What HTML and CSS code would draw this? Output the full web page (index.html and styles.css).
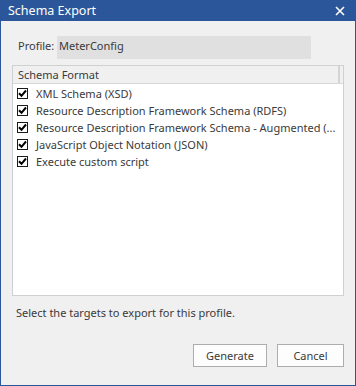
FILE: index.html
```
<!DOCTYPE html>
<html lang="en">
<head>
    <meta charset="UTF-8">
    <meta name="viewport" content="width=device-width, initial-scale=1.0">
    <title>Schema Export</title>
    <link rel="stylesheet" href="styles.css">
</head>
<body>
    <div class="window">
        <div class="titlebar">
            <span class="title">Schema Export</span>
            <svg class="close" width="10" height="10" viewBox="0 0 10 10">
                <path d="M1 1 L9 9 M9 1 L1 9" stroke="#ffffff" stroke-width="1.6"/>
            </svg>
        </div>

        <div class="content">
            <div class="profile-row">
                <span class="profile-label">Profile:</span>
                <div class="profile-value">MeterConfig</div>
            </div>

            <div class="list-box">
                <div class="list-header">
                    <span class="header-cell">Schema Format</span>
                    <span class="header-divider"></span>
                </div>
                <div class="list-body">
                    <label class="list-row"><span class="check"><svg width="9" height="9" viewBox="0 0 9 9"><path d="M1 4.2 L3.5 6.8 L8 1.5" fill="none" stroke="#000" stroke-width="2"/></svg></span>XML Schema (XSD)</label>
                    <label class="list-row"><span class="check"><svg width="9" height="9" viewBox="0 0 9 9"><path d="M1 4.2 L3.5 6.8 L8 1.5" fill="none" stroke="#000" stroke-width="2"/></svg></span>Resource Description Framework Schema (RDFS)</label>
                    <label class="list-row"><span class="check"><svg width="9" height="9" viewBox="0 0 9 9"><path d="M1 4.2 L3.5 6.8 L8 1.5" fill="none" stroke="#000" stroke-width="2"/></svg></span><span class="row-text">Resource Description Framework Schema - Augmented (...</span></label>
                    <label class="list-row"><span class="check"><svg width="9" height="9" viewBox="0 0 9 9"><path d="M1 4.2 L3.5 6.8 L8 1.5" fill="none" stroke="#000" stroke-width="2"/></svg></span>JavaScript Object Notation (JSON)</label>
                    <label class="list-row"><span class="check"><svg width="9" height="9" viewBox="0 0 9 9"><path d="M1 4.2 L3.5 6.8 L8 1.5" fill="none" stroke="#000" stroke-width="2"/></svg></span>Execute custom script</label>
                </div>
            </div>

            <p class="hint">Select the targets to export for this profile.</p>

            <div class="button-row">
                <button class="btn">Generate</button>
                <button class="btn">Cancel</button>
            </div>
        </div>
    </div>
</body>
</html>
```
FILE: styles.css
```
body {
    margin: 0;
    padding: 0;
    font-family: 'Noto Sans', 'Open Sans', sans-serif;
    font-size: 11px;
    color: #3a3a3a;
    background: #f0f0f0;
}

.window {
    width: 356px;
    height: 386px;
    box-sizing: border-box;
    border: 1px solid #2b579a;
    border-top: none;
    background: #f0f0f0;
    display: flex;
    flex-direction: column;
}

.titlebar {
    height: 21px;
    background: #2b579a;
    display: flex;
    align-items: center;
    justify-content: space-between;
    padding: 0 10px 0 7px;
    flex-shrink: 0;
}

.title {
    color: #ffffff;
    font-size: 12.5px;
}

.close {
    display: block;
}

.content {
    flex: 1;
    display: flex;
    flex-direction: column;
    padding: 15px 11px 0 11px;
}

.profile-row {
    display: flex;
    align-items: flex-start;
    padding-left: 6px;
}

.profile-label {
    width: 39px;
    padding-top: 2px;
}

.profile-value {
    width: 254px;
    height: 23px;
    box-sizing: border-box;
    background: #e0e0e0;
    padding: 2px 2px;
}

.list-box {
    margin-top: 6px;
    height: 231px;
    box-sizing: border-box;
    border: 1px solid #d0d0d0;
    background: #ffffff;
    display: flex;
    flex-direction: column;
}

.list-header {
    height: 17px;
    flex-shrink: 0;
    background: #f0f0f0;
    border-bottom: 1px solid #d7d7d7;
    display: flex;
    align-items: center;
    justify-content: space-between;
}

.header-cell {
    padding-left: 5px;
}

.header-divider {
    width: 2px;
    height: 17px;
    background: #d4d4d4;
    margin-right: 3px;
}

.list-body {
    padding-top: 1px;
}

.list-row {
    height: 17px;
    display: flex;
    align-items: center;
    padding-left: 4px;
    white-space: nowrap;
    overflow: hidden;
}

.row-text {
    white-space: nowrap;
}

.check {
    width: 11px;
    height: 11px;
    box-sizing: border-box;
    border: 1px solid #1a1a1a;
    background: #ffffff;
    margin-right: 8px;
    flex-shrink: 0;
    display: flex;
    align-items: center;
    justify-content: center;
}

.check svg {
    display: block;
}

.hint {
    margin: 9px 0 0 4px;
}

.button-row {
    display: flex;
    justify-content: flex-end;
    gap: 10px;
    margin-top: 24px;
}

.btn {
    height: 23px;
    box-sizing: border-box;
    border: 1px solid #adadad;
    background: #fdfdfd;
    font-family: 'Noto Sans', 'Open Sans', sans-serif;
    font-size: 11px;
    color: #3a3a3a;
    padding: 0;
}

.btn:first-child {
    width: 74px;
}

.btn:last-child {
    width: 67px;
}
```
